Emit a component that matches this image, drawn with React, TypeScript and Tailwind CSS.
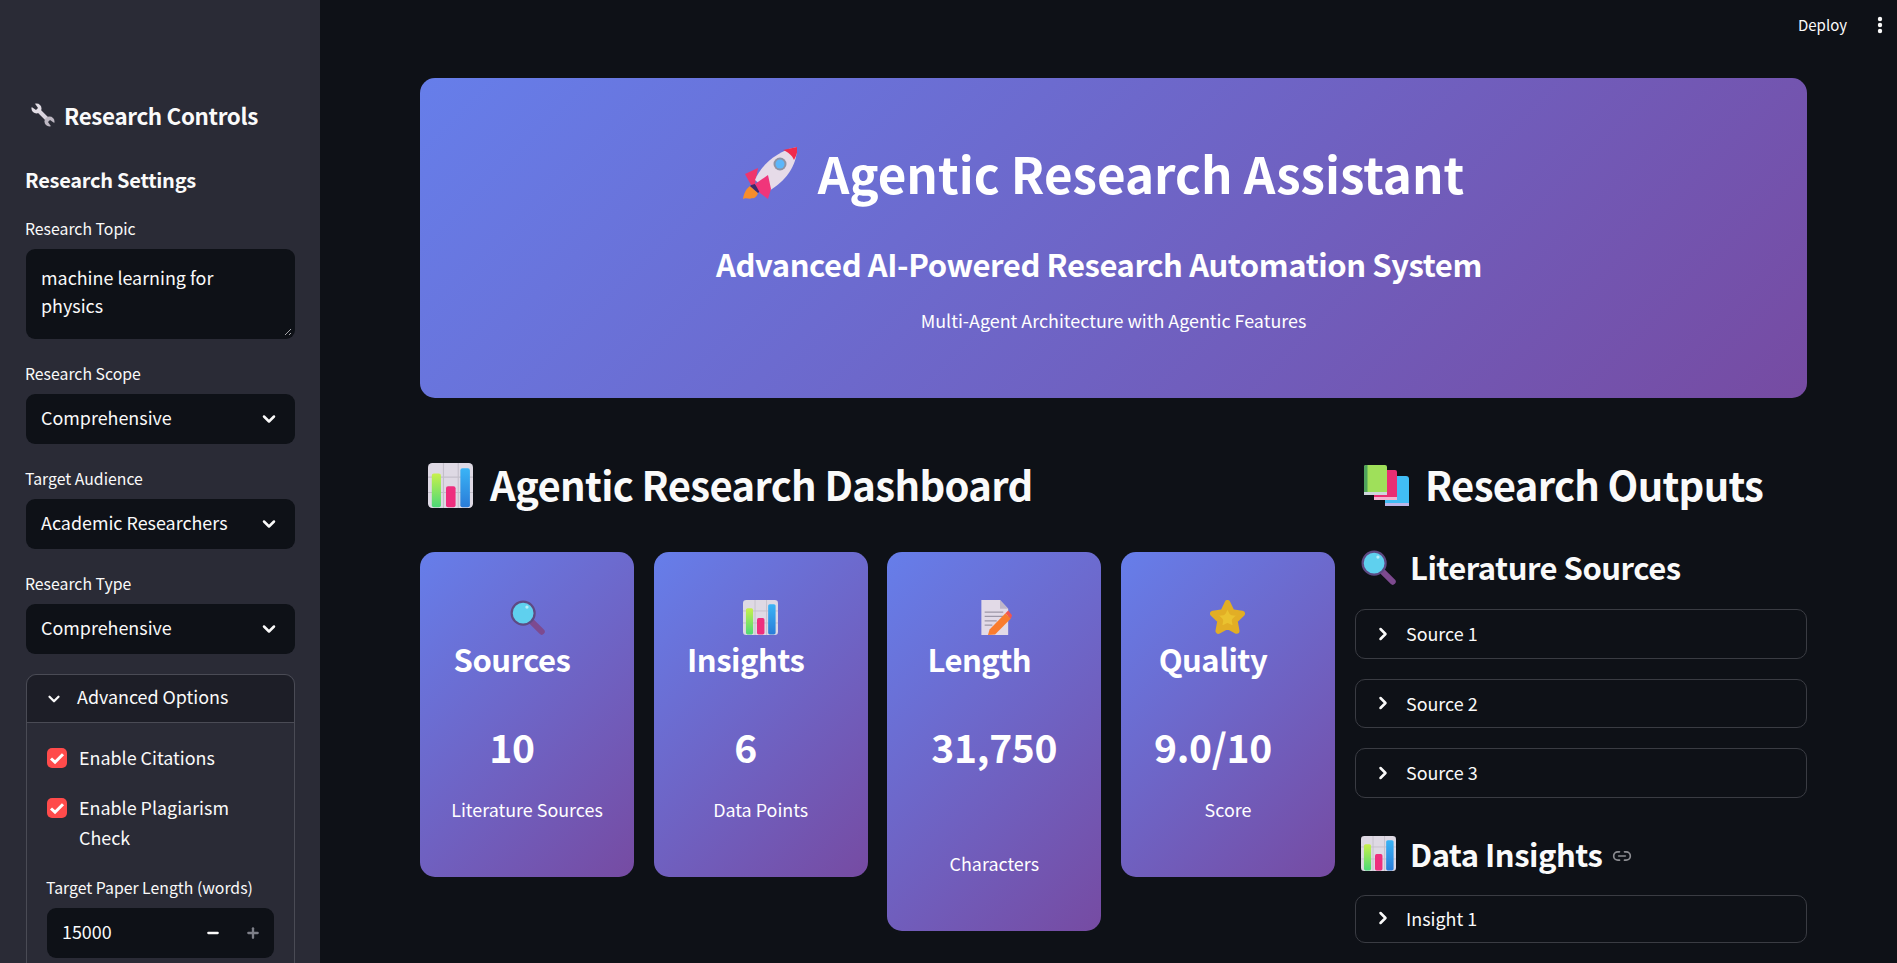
import { ChevronDown, ChevronRight, Link2, Minus, Plus } from "lucide-react";

function ChartIcon({ className }: { className: string }) {
  return (
    <svg viewBox="0 0 32 32" className={className}>
      <defs>
        <linearGradient id="barGreen" x1="0" y1="0" x2="0" y2="1">
          <stop offset="0" stopColor="#c8f04c" />
          <stop offset="1" stopColor="#4cd977" />
        </linearGradient>
        <linearGradient id="barBlue" x1="0" y1="0" x2="0" y2="1">
          <stop offset="0" stopColor="#3ab4f6" />
          <stop offset="1" stopColor="#2a7cd8" />
        </linearGradient>
      </defs>
      <rect x="0" y="0" width="32" height="32" rx="3" fill="#ded9e4" />
      <path d="M11 0v32M21.500 0v32M0 10h32M0 21h32" stroke="#c3bfca" strokeWidth="0.8" />
      <rect x="2.700" y="7.500" width="6.500" height="24" rx="1.500" fill="url(#barGreen)" />
      <rect x="12.800" y="16.500" width="6.800" height="15" rx="1.500" fill="#ee2e7e" />
      <rect x="23" y="3.800" width="6.800" height="27.700" rx="1.500" fill="url(#barBlue)" />
    </svg>
  );
}

function LensIcon({ className }: { className: string }) {
  return (
    <svg viewBox="0 0 32 32" className={className}>
      <path d="M20 20l9 9" stroke="#7d4a8f" strokeWidth="5.500" strokeLinecap="round" />
      <circle cx="12" cy="12" r="10.500" fill="#5fd0ee" stroke="#5e4a83" strokeWidth="2" />
      <circle cx="15.500" cy="6.500" r="1.500" fill="#b9ecf8" />
    </svg>
  );
}

function MemoIcon({ className }: { className: string }) {
  return (
    <svg viewBox="0 0 32 32" className={className}>
      <path d="M4 0h17l7.500 8v24H4z" fill="#e2dae7" />
      <path d="M21 0l7.500 8H21z" fill="#bfb6c9" />
      <path d="M7 11h17M7 15h17M7 19h11M7 23h7" stroke="#9d97a8" strokeWidth="1.100" />
      <path d="M10 32l1.500-5L26 12l5 5-14.500 14.500z" fill="#f97c2e" />
      <path d="M26 12l2.500-2.500 3.500 4.500-1 3z" fill="#f2554f" />
    </svg>
  );
}

function StarIcon({ className }: { className: string }) {
  return (
    <svg viewBox="1 1 30 30" className={className}>
      <path
        d="M16 3.500l3.800 8 8.700 1.200-6.300 6 1.600 8.800-7.800-4.200-7.800 4.200 1.600-8.800-6.300-6 8.700-1.200z"
        fill="#eac22f"
        stroke="#e2ae25"
        strokeWidth="5"
        strokeLinejoin="round"
      />
    </svg>
  );
}

function BooksIcon({ className }: { className: string }) {
  return (
    <svg viewBox="0 0 45 41" className={className}>
      <path d="M21 11h21a3 3 0 0 1 3 3v27H21z" fill="#41bdf5" />
      <path d="M21 38h24v3H21z" fill="#bcb6e8" />
      <path d="M10 5h21a2 2 0 0 1 2 2v28H10z" fill="#e92f73" />
      <path d="M10 32h23v3H10z" fill="#f4b3d0" />
      <path d="M2 0h19a2 2 0 0 1 2 2v28H0V2a2 2 0 0 1 2-2z" fill="#9fe05a" />
      <path d="M0 27h23v3H0z" fill="#cfd6dc" />
      <path d="M2 0h1.500v27H0V2a2 2 0 0 1 2-2z" fill="#4fa35b" />
    </svg>
  );
}

function RocketIcon({ className }: { className: string }) {
  return (
    <svg viewBox="0 0 54 53" className={className}>
      <path d="M0 52C1 46 3 42 7 39l8 7c-1 3-3 6-6 5-2 2-6-1-9 1z" fill="#f78d2b" />
      <path d="M7 39l4-3 7 7-3 3z" fill="#3b2b6b" />
      <path d="M2 27l13-6-3 16-4 1z" fill="#f0356c" />
      <path d="M12 33C18 18 34 4 54 0c0 20-12 34-28 44l-6-4z" fill="#e6dbe8" />
      <path d="M40 3l14-3c1 5-1 10-3 13-2-5-6-8-11-10z" fill="#f02a4c" />
      <circle cx="37" cy="17" r="6.500" fill="#8d93a6" />
      <circle cx="37" cy="17" r="4.500" fill="#5bb6fa" />
      <path d="M12 37l13-9 3 14-3 10-8-6z" fill="#f0357a" />
    </svg>
  );
}

function WrenchIcon({ className }: { className: string }) {
  return (
    <svg viewBox="0 0 24 24" className={className}>
      <path d="M5 5l14 14" stroke="#d9d3dd" strokeWidth="4" />
      <circle cx="5.500" cy="5.500" r="5" fill="#e2dde5" />
      <circle cx="18.500" cy="18.500" r="5" fill="#bdb7c2" />
      <path d="M0 3.500L5 7l2-2-3.500-5H0z" fill="#2a2b36" />
      <path d="M24 20.500L19 17l-2 2 3.500 5H24z" fill="#2a2b36" />
    </svg>
  );
}

function FieldLabel({ text }: { text: string }) {
  return <p className="-ml-[1px] text-[15.800px] leading-[20px] text-[#fafafa]">{text}</p>;
}

function SelectBox({ label, value }: { label: string; value: string }) {
  return (
    <div className="flex flex-col gap-[10px]">
      <FieldLabel text={label} />
      <div className="flex h-[50px] items-center justify-between rounded-[9px] bg-[#0e1117] pb-[3px] pl-[15px] pr-[16px] text-[17.900px] text-[#fafafa]">
        <span>{value}</span>
        <ChevronDown className="mt-[3px] h-[20px] w-[20px]" strokeWidth={3} />
      </div>
    </div>
  );
}

function CheckRow({ lines }: { lines: string[] }) {
  return (
    <div className="flex gap-[12px] text-[17.900px] leading-[30px] text-[#fafafa]">
      <div className="mt-[5px] flex h-[20px] w-[20px] shrink-0 items-center justify-center rounded-[5px] bg-[#ff4b4b]">
        <svg viewBox="0 0 20 20" className="h-[20px] w-[20px]">
          <path d="M4 10.500l4 3.700 8-8" fill="none" stroke="#fff" strokeWidth="3" />
        </svg>
      </div>
      <div className="-mt-[1px] mb-[1px]">
        {lines.map((line) => (
          <p key={line}>{line}</p>
        ))}
      </div>
    </div>
  );
}

function Sidebar() {
  return (
    <aside className="h-[963px] w-[320px] shrink-0 overflow-hidden bg-[#2a2b36] pl-[26px] pr-[25px] pt-[100px]">
      <div className="flex items-center gap-[9px] pl-[5px]">
        <WrenchIcon className="h-[24px] w-[24px]" />
        <h2 className="text-[22.400px] font-semibold leading-[30px] tracking-[-0.35px] text-[#fafafa]">Research Controls</h2>
      </div>
      <h3 className="mt-[36px] -ml-[1px] text-[20px] font-semibold leading-[28px] tracking-[-0.26px] text-[#fafafa]">Research Settings</h3>
      <div className="mt-[25px] flex flex-col gap-[10px]">
        <FieldLabel text="Research Topic" />
        <div className="relative h-[90px] rounded-[9px] bg-[#0e1117] px-[15px] pt-[14px] text-[17.900px] leading-[28px] text-[#fafafa]">
          <p>machine learning for</p>
          <p>physics</p>
          <svg viewBox="0 0 8 8" className="absolute bottom-[3px] right-[3px] h-[8px] w-[8px]">
            <path d="M1 7l6-6M5 7l2-2" stroke="#a5a5a8" strokeWidth="1" />
          </svg>
        </div>
      </div>
      <div className="mt-[25px] flex flex-col gap-[25px]">
        <SelectBox label="Research Scope" value="Comprehensive" />
        <SelectBox label="Target Audience" value="Academic Researchers" />
        <SelectBox label="Research Type" value="Comprehensive" />
      </div>
      <div className="mt-[20px] rounded-[10px] border border-[#4a4b55]">
        <div className="flex h-[48px] items-center gap-[14px] rounded-t-[10px] border-b border-[#4a4b55] bg-[#1d1e27] pb-[4px] pl-[18px] text-[17.900px] text-[#fafafa]">
          <ChevronDown className="mt-[4px] h-[18px] w-[18px]" strokeWidth={3} />
          <span>Advanced Options</span>
        </div>
        <div className="px-[20px] pb-[60px] pt-[20px]">
          <div className="flex flex-col gap-[20px]">
            <CheckRow lines={["Enable Citations"]} />
            <CheckRow lines={["Enable Plagiarism", "Check"]} />
          </div>
          <div className="mt-[25px] flex flex-col gap-[10px]">
            <FieldLabel text="Target Paper Length (words)" />
            <div className="flex h-[50px] items-center justify-between rounded-[9px] bg-[#0e1117] pb-[3px] pl-[15px] pr-[13px] text-[17.900px] text-[#fafafa]">
              <span>15000</span>
              <div className="mt-[3px] flex items-center gap-[24px]">
                <Minus className="h-[16px] w-[16px]" strokeWidth={3.500} />
                <Plus className="h-[16px] w-[16px] text-[#7d7f88]" strokeWidth={3.500} />
              </div>
            </div>
          </div>
        </div>
      </div>
    </aside>
  );
}

function Banner() {
  return (
    <section className="flex h-[320px] flex-col items-center rounded-[15px] bg-[linear-gradient(135deg,#667eea,#764ba2)] pt-[65px] text-white">
      <div className="flex h-[60px] items-center gap-[21px] pr-[20px]">
        <RocketIcon className="h-[53px] w-[54px]" />
        <h1 className="text-[49.300px] font-bold leading-[60px]">Agentic Research Assistant</h1>
      </div>
      <h2 className="mt-[38.500px] pr-[29px] text-[31px] font-semibold leading-[44px] tracking-[-0.42px]">Advanced AI-Powered Research Automation System</h2>
      <p className="mt-[20px] text-[17.900px] leading-[28px]">Multi-Agent Architecture with Agentic Features</p>
    </section>
  );
}

const metrics = [
  { title: "Sources", value: "10", label: "Literature Sources", icon: <LensIcon className="h-[35px] w-[35px]" /> },
  { title: "Insights", value: "6", label: "Data Points", icon: <ChartIcon className="h-[35px] w-[35px]" /> },
  { title: "Length", value: "31,750", label: "Characters", wraps: true, icon: <MemoIcon className="h-[35px] w-[35px]" /> },
  { title: "Quality", value: "9.0/10", label: "Score", icon: <StarIcon className="h-[35px] w-[35px]" /> },
];

function MetricCard({ title, value, label, icon, wraps }: { title: string; value: string; label: string; icon: React.ReactNode; wraps?: boolean }) {
  return (
    <div className="flex flex-col items-center rounded-[15px] bg-[linear-gradient(135deg,#667eea,#764ba2)] pb-[55px] pt-[48px] text-white">
      {icon}
      <h3 className="mt-[1px] w-full pr-[30px] text-center text-[31px] font-semibold leading-[46px] tracking-[-0.5px]">{title}</h3>
      <p className={wraps ? "mt-[37px] h-[108px] w-full text-center text-[39px] font-semibold leading-[54px] tracking-[-0.3px]" : "mt-[37px] h-[54px] w-full pr-[30px] text-center text-[39px] font-semibold leading-[54px] tracking-[-0.3px]"}>
        {value}
      </p>
      <p className="mt-[23px] text-[17.900px] leading-[26px]">{label}</p>
    </div>
  );
}

function CollapsedRow({ text, short }: { text: string; short?: boolean }) {
  return (
    <div className={`flex items-center gap-[13px] rounded-[10px] border border-[#3a3c43] pl-[17px] text-[17.900px] text-[#fafafa] ${short ? "h-[48.500px] pb-[1px]" : "h-[49.500px]"}`}>
      <ChevronRight className="h-[20px] w-[20px]" strokeWidth={3} />
      <span>{text}</span>
    </div>
  );
}

export default function App() {
  return (
    <div className="flex h-[963px] overflow-hidden bg-[#0e1117] font-['Noto_Sans_CJK_JP','Source_Sans_Pro',sans-serif]">
      <Sidebar />
      <main className="relative flex-1 pl-[100px] pr-[90px] pt-[78px]">
        <div className="absolute right-[14px] top-[15px] flex items-center gap-[30px] text-[15px] leading-[20px] text-[#fafafa]">
          <span>Deploy</span>
          <svg viewBox="0 0 6 18" className="h-[18px] w-[6px]">
            <circle cx="3" cy="3" r="2.200" fill="#fafafa" />
            <circle cx="3" cy="9" r="2.200" fill="#fafafa" />
            <circle cx="3" cy="15" r="2.200" fill="#fafafa" />
          </svg>
        </div>
        <Banner />
        <div className="mt-[62px] grid grid-cols-[915px_452px] gap-[20px]">
          <div>
            <div className="flex h-[50px] items-center gap-[17px] pl-[8px]">
              <ChartIcon className="h-[45px] w-[45px]" />
              <h2 className="pb-[2px] text-[40px] font-semibold leading-[50px] tracking-[-0.66px] text-[#fafafa]">Agentic Research Dashboard</h2>
            </div>
            <div className="mt-[42px] grid grid-cols-4 items-start gap-[19.600px]">
              {metrics.map((m) => (
                <MetricCard key={m.title} {...m} />
              ))}
            </div>
          </div>
          <div>
            <div className="flex h-[50px] items-center gap-[16px] pl-[9px]">
              <BooksIcon className="h-[41px] w-[45px]" />
              <h2 className="pb-[2px] text-[40px] font-semibold leading-[50px] tracking-[-0.7px] text-[#fafafa]">Research Outputs</h2>
            </div>
            <div className="mt-[35px] flex h-[44px] items-center gap-[14px] pl-[6px]">
              <LensIcon className="h-[35px] w-[35px]" />
              <h3 className="text-[31px] font-semibold leading-[44px] tracking-[-0.5px] text-[#fafafa]">Literature Sources</h3>
            </div>
            <div className="mt-[20px] flex flex-col gap-[20px]">
              <CollapsedRow text="Source 1" />
              <CollapsedRow text="Source 2" />
              <CollapsedRow text="Source 3" />
            </div>
            <div className="mt-[34px] flex h-[44px] items-center gap-[14px] pl-[6px]">
              <ChartIcon className="h-[35px] w-[35px]" />
              <h3 className="text-[31px] font-semibold leading-[44px] tracking-[-0.5px] text-[#fafafa]">Data Insights</h3>
              <Link2 className="-ml-[4px] mt-[4px] h-[20px] w-[20px] text-[#8c8d92]" strokeWidth={2} />
            </div>
            <div className="mt-[19px]">
              <CollapsedRow text="Insight 1" short />
            </div>
          </div>
        </div>
      </main>
    </div>
  );
}
